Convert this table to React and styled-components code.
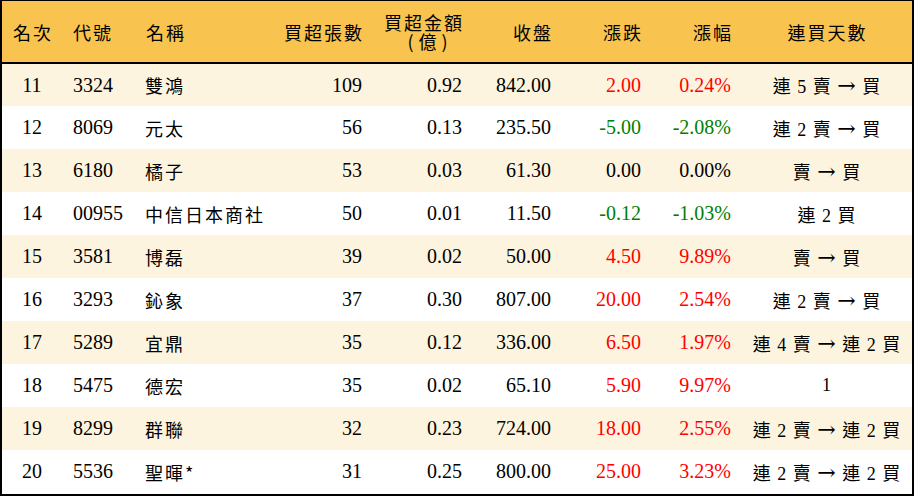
import React from "react";
import styled, { createGlobalStyle } from "styled-components";

const rows = [
  { rank: 11, code: "3324", name: "雙鴻", vol: 109, amt: "0.92", close: "842.00", chg: "2.00", pct: "0.24%", streak: "連 5 賣 → 買" },
  { rank: 12, code: "8069", name: "元太", vol: 56, amt: "0.13", close: "235.50", chg: "-5.00", pct: "-2.08%", streak: "連 2 賣 → 買" },
  { rank: 13, code: "6180", name: "橘子", vol: 53, amt: "0.03", close: "61.30", chg: "0.00", pct: "0.00%", streak: "賣 → 買" },
  { rank: 14, code: "00955", name: "中信日本商社", vol: 50, amt: "0.01", close: "11.50", chg: "-0.12", pct: "-1.03%", streak: "連 2 買" },
  { rank: 15, code: "3581", name: "博磊", vol: 39, amt: "0.02", close: "50.00", chg: "4.50", pct: "9.89%", streak: "賣 → 買" },
  { rank: 16, code: "3293", name: "鈊象", vol: 37, amt: "0.30", close: "807.00", chg: "20.00", pct: "2.54%", streak: "連 2 賣 → 買" },
  { rank: 17, code: "5289", name: "宜鼎", vol: 35, amt: "0.12", close: "336.00", chg: "6.50", pct: "1.97%", streak: "連 4 賣 → 連 2 買" },
  { rank: 18, code: "5475", name: "德宏", vol: 35, amt: "0.02", close: "65.10", chg: "5.90", pct: "9.97%", streak: "1" },
  { rank: 19, code: "8299", name: "群聯", vol: 32, amt: "0.23", close: "724.00", chg: "18.00", pct: "2.55%", streak: "連 2 賣 → 連 2 買" },
  { rank: 20, code: "5536", name: "聖暉*", vol: 31, amt: "0.25", close: "800.00", chg: "25.00", pct: "3.23%", streak: "連 2 賣 → 連 2 買" },
];

const widths = [60, 73, 135, 102, 100, 89, 90, 90, 171];

function tone(v) {
  const n = parseFloat(v);
  if (n > 0) return "up";
  if (n < 0) return "down";
  return "flat";
}

// split "連 2 賣 → 買" so the arrow can use a font with a long arrow glyph
function StreakText({ text }) {
  const parts = text.split("→");
  return parts.map((p, i) => (
    <React.Fragment key={i}>
      {i > 0 && <Arrow>→</Arrow>}
      {p}
    </React.Fragment>
  ));
}

export default function App() {
  return (
    <>
      <Global />
      <Frame>
        <Table>
          <colgroup>
            {widths.map((w, i) => (
              <col key={i} style={{ width: w }} />
            ))}
          </colgroup>
          <thead>
            <tr>
              <Th $align="center">名次</Th>
              <Th>代號</Th>
              <Th>名稱</Th>
              <Th $align="right">買超張數</Th>
              <Th $align="right">
                <Stack>
                  <Line>買超金額</Line>
                  <Line $unit>(億)</Line>
                </Stack>
              </Th>
              <Th $align="right">收盤</Th>
              <Th $align="right">漲跌</Th>
              <Th $align="right">漲幅</Th>
              <Th $align="center">連買天數</Th>
            </tr>
          </thead>
          <tbody>
            {rows.map((r, i) => (
              <Row key={r.rank} $odd={i % 2 === 0}>
                <Td $align="center">{r.rank}</Td>
                <Td>{r.code}</Td>
                <Name>{r.name}</Name>
                <Td $align="right">{r.vol}</Td>
                <Td $align="right">{r.amt}</Td>
                <Td $align="right">{r.close}</Td>
                <Td $align="right" $tone={tone(r.chg)}>{r.chg}</Td>
                <Td $align="right" $tone={tone(r.pct)}>{r.pct}</Td>
                <Streak>
                  <StreakText text={r.streak} />
                </Streak>
              </Row>
            ))}
          </tbody>
        </Table>
      </Frame>
    </>
  );
}

const Global = createGlobalStyle`
  body {
    margin: 0;
    background: #fff;
    font-family: "Liberation Serif", "Noto Sans CJK TC", serif;
  }
`;

const Frame = styled.div`
  width: 914px;
  height: 496px;
  box-sizing: border-box;
  border: 2px solid #000;
  border-top-width: 1px;
  overflow: hidden;
`;

const Table = styled.table`
  width: 100%;
  table-layout: fixed;
  border-collapse: collapse;
  border-spacing: 0;
  color: #000;
  font-size: 20px;
`;

const Th = styled.th`
  height: 61px;
  padding: 0 8px 0 11px;
  background: #f9c34f;
  border-bottom: 2px solid #000;
  font-family: "Noto Sans CJK TC", sans-serif;
  font-size: 18px;
  font-weight: 400;
  letter-spacing: 2px;
  line-height: 20px;
  text-align: ${({ $align }) => $align || "left"};
  vertical-align: middle;
  white-space: nowrap;

  &:first-child,
  &:last-child {
    padding: 0 0 0 2px;
  }
`;

const Stack = styled.div`
  display: inline-flex;
  flex-direction: column;
  align-items: center;
`;

const Line = styled.div`
  height: 19px;
  line-height: 19px;
  letter-spacing: ${({ $unit }) => ($unit ? "5px" : "2px")};
  margin-left: ${({ $unit }) => ($unit ? "12px" : "0")};
`;

const Row = styled.tr`
  height: 43px;
  background: ${({ $odd }) => ($odd ? "#fdf4df" : "#fff")};
`;

const Td = styled.td`
  padding: 0 10px 0 11px;
  text-align: ${({ $align }) => $align || "left"};
  vertical-align: middle;
  white-space: nowrap;
  color: ${({ $tone }) =>
    $tone === "up" ? "#ff0000" : $tone === "down" ? "#008000" : "#000"};

  &:first-child {
    padding: 0;
  }
`;

const Name = styled.td`
  padding: 0 0 0 10px;
  font-family: "Noto Sans CJK TC", sans-serif;
  font-size: 18px;
  letter-spacing: 2px;
  vertical-align: middle;
  white-space: nowrap;
`;

const Streak = styled.td`
  padding: 0;
  text-align: center;
  font-size: 18px;
  word-spacing: 2px;
  vertical-align: middle;
  white-space: nowrap;
`;

const Arrow = styled.span`
  font-family: "DejaVu Serif", serif;
  font-size: 22px;
  line-height: 1;
`;
